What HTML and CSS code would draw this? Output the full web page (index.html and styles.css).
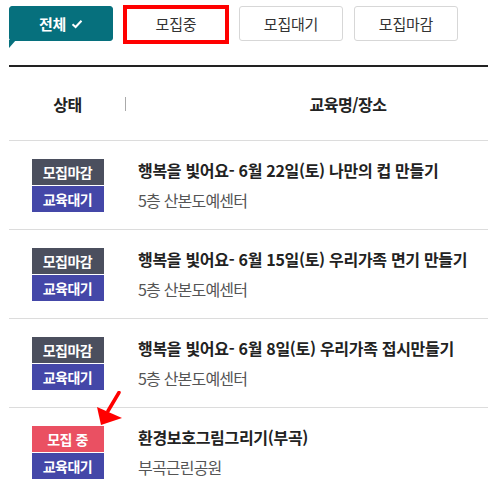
FILE: index.html
```html
<!DOCTYPE html>
<html lang="ko">
<head>
<meta charset="utf-8">
<link rel="stylesheet" href="styles.css">
</head>
<body>
<div class="page">
  <div class="tabs">
    <button class="tab tab-active">전체 <svg class="check" width="12" height="10" viewBox="0 0 12 10"><path d="M1.5 5.2 L4.6 8 L10.5 1.8" fill="none" stroke="#fff" stroke-width="2"/></svg></button>
    <button class="tab tab-marked">모집중</button>
    <button class="tab">모집대기</button>
    <button class="tab">모집마감</button>
  </div>
  <div class="table">
    <div class="thead">
      <div class="th th-status">상태</div>
      <div class="th th-title">교육명/장소</div>
    </div>
    <div class="row">
      <div class="status">
        <span class="badge badge-closed">모집마감</span>
        <span class="badge badge-wait">교육대기</span>
      </div>
      <div class="info">
        <div class="title">행복을 빛어요- 6월 22일(토) 나만의 컵 만들기</div>
        <div class="place">5층 산본도예센터</div>
      </div>
    </div>
    <div class="row">
      <div class="status">
        <span class="badge badge-closed">모집마감</span>
        <span class="badge badge-wait">교육대기</span>
      </div>
      <div class="info">
        <div class="title">행복을 빛어요- 6월 15일(토) 우리가족 면기 만들기</div>
        <div class="place">5층 산본도예센터</div>
      </div>
    </div>
    <div class="row">
      <div class="status">
        <span class="badge badge-closed">모집마감</span>
        <span class="badge badge-wait">교육대기</span>
      </div>
      <div class="info">
        <div class="title">행복을 빛어요- 6월 8일(토) 우리가족 접시만들기</div>
        <div class="place">5층 산본도예센터</div>
      </div>
    </div>
    <div class="row">
      <div class="status">
        <span class="badge badge-open">모집 중</span>
        <span class="badge badge-wait">교육대기</span>
      </div>
      <div class="info">
        <div class="title">환경보호그림그리기(부곡)</div>
        <div class="place">부곡근린공원</div>
      </div>
    </div>
  </div>
  <svg class="arrow" width="32" height="38" viewBox="0 0 32 38"><line x1="25" y1="1.5" x2="14" y2="20" stroke="#f00" stroke-width="3.5" stroke-linecap="round"/><polygon points="3,16 28,27 7,34" fill="#f00"/></svg>
</div>
</body>
</html>
```
FILE: styles.css
```css
* { box-sizing: border-box; }
html, body { margin: 0; padding: 0; background: #fff; }
body {
  font-family: "Malgun Gothic", "Noto Sans CJK KR", "Noto Sans", sans-serif;
  color: #222;
  width: 488px;
  overflow: hidden;
}
.page {
  position: relative;
  padding: 6px 0 0 9px;
}
.tabs {
  display: flex;
  gap: 11px;
  height: 59px;
}
.tab {
  position: relative;
  width: 104px;
  height: 35px;
  border: 1px solid #d7d7d7;
  border-radius: 3px;
  background: #fff;
  font-family: inherit;
  font-size: 15px;
  letter-spacing: -0.2px;
  color: #333;
  padding: 0;
  display: flex;
  align-items: center;
  justify-content: center;
  gap: 5px;
}
.tab-active {
  background: #06707d;
  border-color: #06707d;
  color: #fff;
  font-weight: bold;
}
.tab-active::after {
  content: "";
  position: absolute;
  left: -1px;
  top: 33px;
  border-left: 7px solid #06707d;
  border-bottom: 8px solid transparent;
}
.check { margin-top: 1px; }
.tab-marked::after {
  content: "";
  position: absolute;
  left: -2px;
  top: -2px;
  right: -2px;
  bottom: -4px;
  border: 4px solid #f00;
}
.table {
  border-top: 2px solid #222;
}
.thead {
  display: flex;
  align-items: center;
  height: 74px;
  border-bottom: 1px solid #dcdcdc;
}
.th {
  font-size: 16px;
  font-weight: bold;
  color: #222;
  letter-spacing: -0.5px;
  text-align: center;
}
.th-status {
  width: 117px;
  position: relative;
}
.th-status::after {
  content: "";
  position: absolute;
  right: 0;
  top: 50%;
  margin-top: -7px;
  width: 1px;
  height: 14px;
  background: #aaa;
}
.th-title { flex: 1; padding-left: 82px; }
.row {
  display: flex;
  align-items: center;
  height: 89px;
  border-bottom: 1px solid #dcdcdc;
}
.status {
  width: 117px;
  display: flex;
  flex-direction: column;
  align-items: center;
  gap: 1px;
}
.badge {
  display: block;
  width: 72px;
  height: 26px;
  line-height: 26px;
  text-align: center;
  color: #fff;
  font-size: 14px;
  font-weight: bold;
  letter-spacing: -0.5px;
}
.badge-closed { background: #4b4f5e; }
.badge-wait { background: #4447a8; }
.badge-open { background: #ea5062; }
.info {
  padding-left: 12px;
  display: flex;
  flex-direction: column;
  gap: 8px;
}
.title {
  font-size: 16px;
  font-weight: bold;
  color: #222;
  letter-spacing: -0.3px;
  line-height: 22px;
}
.place {
  font-size: 16px;
  color: #555;
  letter-spacing: -0.8px;
  line-height: 22px;
}
.arrow {
  position: absolute;
  left: 94px;
  top: 391px;
}
```
